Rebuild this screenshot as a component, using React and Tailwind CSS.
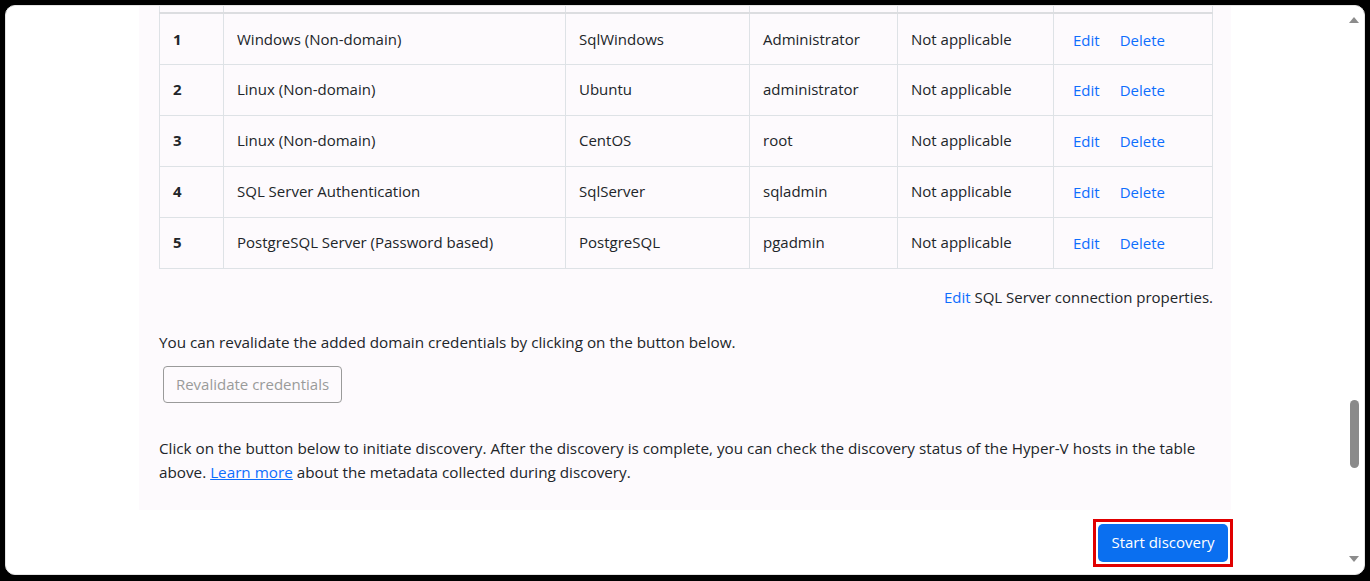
import React from "react";

const rows = [
  ["1", "Windows (Non-domain)", "SqlWindows", "Administrator"],
  ["2", "Linux (Non-domain)", "Ubuntu", "administrator"],
  ["3", "Linux (Non-domain)", "CentOS", "root"],
  ["4", "SQL Server Authentication", "SqlServer", "sqladmin"],
  ["5", "PostgreSQL Server (Password based)", "PostgreSQL", "pgadmin"],
];

const cols = ["w-[64px]", "w-[342px]", "w-[184px]", "w-[148px]", "w-[156px]", "w-[159px]"];

export default function App() {
  return (
    <div
      className="h-[581px] w-[1370px] bg-black pt-[5px] pl-[5px] pr-[5px] pb-[6px] overflow-hidden"
      style={{ fontFamily: "'Open Sans', 'Noto Sans', sans-serif" }}
    >
      <div className="flex h-full rounded-[10px] border border-[#e4e4e4] bg-white overflow-hidden text-[#212529]">
        <div className="flex-1 flex flex-col">
          <div className="ml-[133px] w-[1092px] bg-[#fdfafd] pl-5 pr-[18px] pb-[26px]">
            <table className="border-collapse table-fixed w-[1053px] text-[15px]">
              <colgroup>
                {cols.map((c, i) => (
                  <col key={i} className={c} />
                ))}
              </colgroup>
              <thead>
                <tr className="h-[7px] border-b-2 border-[#dcdde0]">
                  {cols.map((c, i) => (
                    <th key={i} className="border-x border-[#dee2e6] p-0" />
                  ))}
                </tr>
              </thead>
              <tbody>
                {rows.map((r) => (
                  <tr key={r[0]} className="h-[51px] border-b border-[#dee2e6]">
                    <td className="border-x border-[#dee2e6] px-[13px] font-bold">{r[0]}</td>
                    <td className="border-x border-[#dee2e6] px-[13px]">{r[1]}</td>
                    <td className="border-x border-[#dee2e6] px-[13px]">{r[2]}</td>
                    <td className="border-x border-[#dee2e6] px-[13px]">{r[3]}</td>
                    <td className="border-x border-[#dee2e6] px-[13px]">Not applicable</td>
                    <td className="border-x border-[#dee2e6] px-[19px]">
                      <div className="flex gap-[20px] pt-[2px] text-[#0d6efd]">
                        <a href="#">Edit</a>
                        <a href="#">Delete</a>
                      </div>
                    </td>
                  </tr>
                ))}
              </tbody>
            </table>

            <p className="mt-[16px] text-right text-[15px] leading-6">
              <a href="#" className="text-[#0d6efd]">Edit</a> SQL Server connection properties.
            </p>

            <p className="mt-[21px] text-[15.25px] leading-6">
              You can revalidate the added domain credentials by clicking on the button below.
            </p>
            <button
              disabled
              className="ml-1 mt-3 h-[37px] w-[179px] rounded-[4px] border border-[#9a9a9a] text-[15px] text-[#9a9a9a]"
            >
              Revalidate credentials
            </button>

            <p className="mt-[33px] text-[15.25px] leading-6">
              Click on the button below to initiate discovery. After the discovery is complete, you can check the discovery status of the Hyper-V hosts in the table above.{" "}
              <a href="#" className="text-[#0d6efd] underline">Learn more</a> about the metadata collected during discovery.
            </p>
          </div>

          <div className="flex justify-end pr-[111px] pt-[9px]">
            <div className="border-[3px] border-[#e00000] p-[2px]">
              <button className="h-[38px] w-[130px] rounded-[5px] bg-[#0a6ff0] text-[15px] text-white">
                Start discovery
              </button>
            </div>
          </div>
        </div>

        <div className="relative w-[20px] flex flex-col items-center justify-between py-[10px]">
          <svg width="10" height="6" viewBox="0 0 10 6" className="mt-[1px]">
            <path d="M0 6 L5 0 L10 6 Z" fill="#8c8c8c" />
          </svg>
          <div className="absolute left-[6px] top-[394px] h-[68px] w-[9px] rounded-full bg-[#8a8a8a]" />
          <svg width="10" height="6" viewBox="0 0 10 6" className="mb-[2px]">
            <path d="M0 0 L5 6 L10 0 Z" fill="#8c8c8c" />
          </svg>
        </div>
      </div>
    </div>
  );
}
